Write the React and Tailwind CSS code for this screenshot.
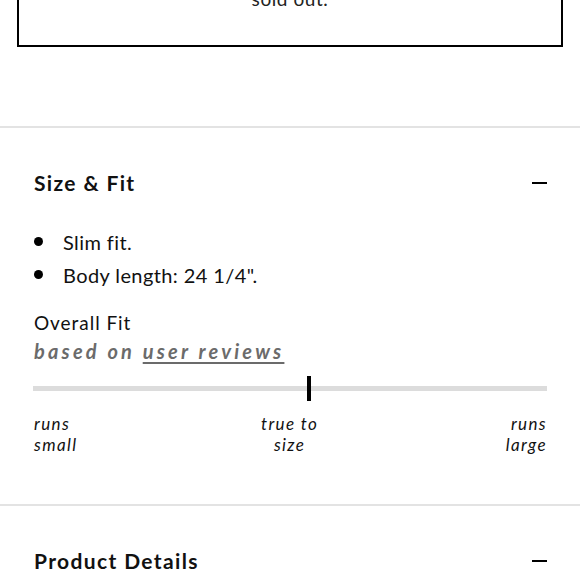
import React from "react";

const fit = { value: 0.537, labels: [["runs", "small"], ["true to", "size"], ["runs", "large"]] };

const bullets = ["Slim fit.", 'Body length: 24 1/4".'];

function Minus() {
  return <span className="block w-[15px] h-[2px] bg-black" />;
}

function SectionHeader({ title }) {
  return (
    <div className="flex items-center justify-between h-[28px]">
      <h2 className="text-[21px] leading-[28px] font-bold tracking-[0.065em] text-[#111]">{title}</h2>
      <Minus />
    </div>
  );
}

export default function App() {
  return (
    <div className="w-[580px] h-[580px] overflow-hidden bg-white text-[#111]" style={{ fontFamily: "Lato, 'Open Sans', sans-serif" }}>
      {/* sold out notice */}
      <div className="mx-[17px] -mt-[40px] h-[87px] border-2 border-black flex flex-col justify-end items-center pb-[34px]">
        <p className="text-[19px] leading-[24px] tracking-[0.03em] text-[#222]">sold out.</p>
      </div>

      {/* Size & Fit */}
      <section className="mt-[79px] border-t-2 border-[#e3e3e3] pl-[34px] pr-[33px] pt-[41px] pb-[49px]">
        <SectionHeader title="Size & Fit" />

        <ul className="mt-[28px]">
          {bullets.map((b) => (
            <li key={b} className="flex items-center h-[33px] text-[20px] tracking-[0.02em]">
              <span className="w-[9px] h-[9px] rounded-full bg-black mr-[20px]" />
              {b}
            </li>
          ))}
        </ul>

        <p className="mt-[18px] text-[19px] leading-[28px] tracking-[0.05em]">Overall Fit</p>
        <p className="text-[20px] leading-[28px] font-bold italic text-[#6b6b6b] tracking-[0.16em]">
          based on <span className="underline underline-offset-[3px]">user reviews</span>
        </p>

        {/* fit bar */}
        <div className="relative mt-[21px] h-[5px] bg-[#dcdcdc] -ml-[1px]">
          <span
            className="absolute -top-[10px] w-[4px] h-[25px] bg-black -translate-x-1/2"
            style={{ left: `${fit.value * 100}%` }}
          />
        </div>

        <div className="mt-[23px] flex justify-between text-[17px] leading-[20.5px] italic tracking-[0.08em]">
          <div className="text-left">{fit.labels[0][0]}<br />{fit.labels[0][1]}</div>
          <div className="text-center -ml-[4px]">{fit.labels[1][0]}<br />{fit.labels[1][1]}</div>
          <div className="text-right">{fit.labels[2][0]}<br />{fit.labels[2][1]}</div>
        </div>
      </section>

      {/* Product Details */}
      <section className="border-t-2 border-[#e3e3e3] pl-[34px] pr-[33px] pt-[41px]">
        <SectionHeader title="Product Details" />
      </section>
    </div>
  );
}
